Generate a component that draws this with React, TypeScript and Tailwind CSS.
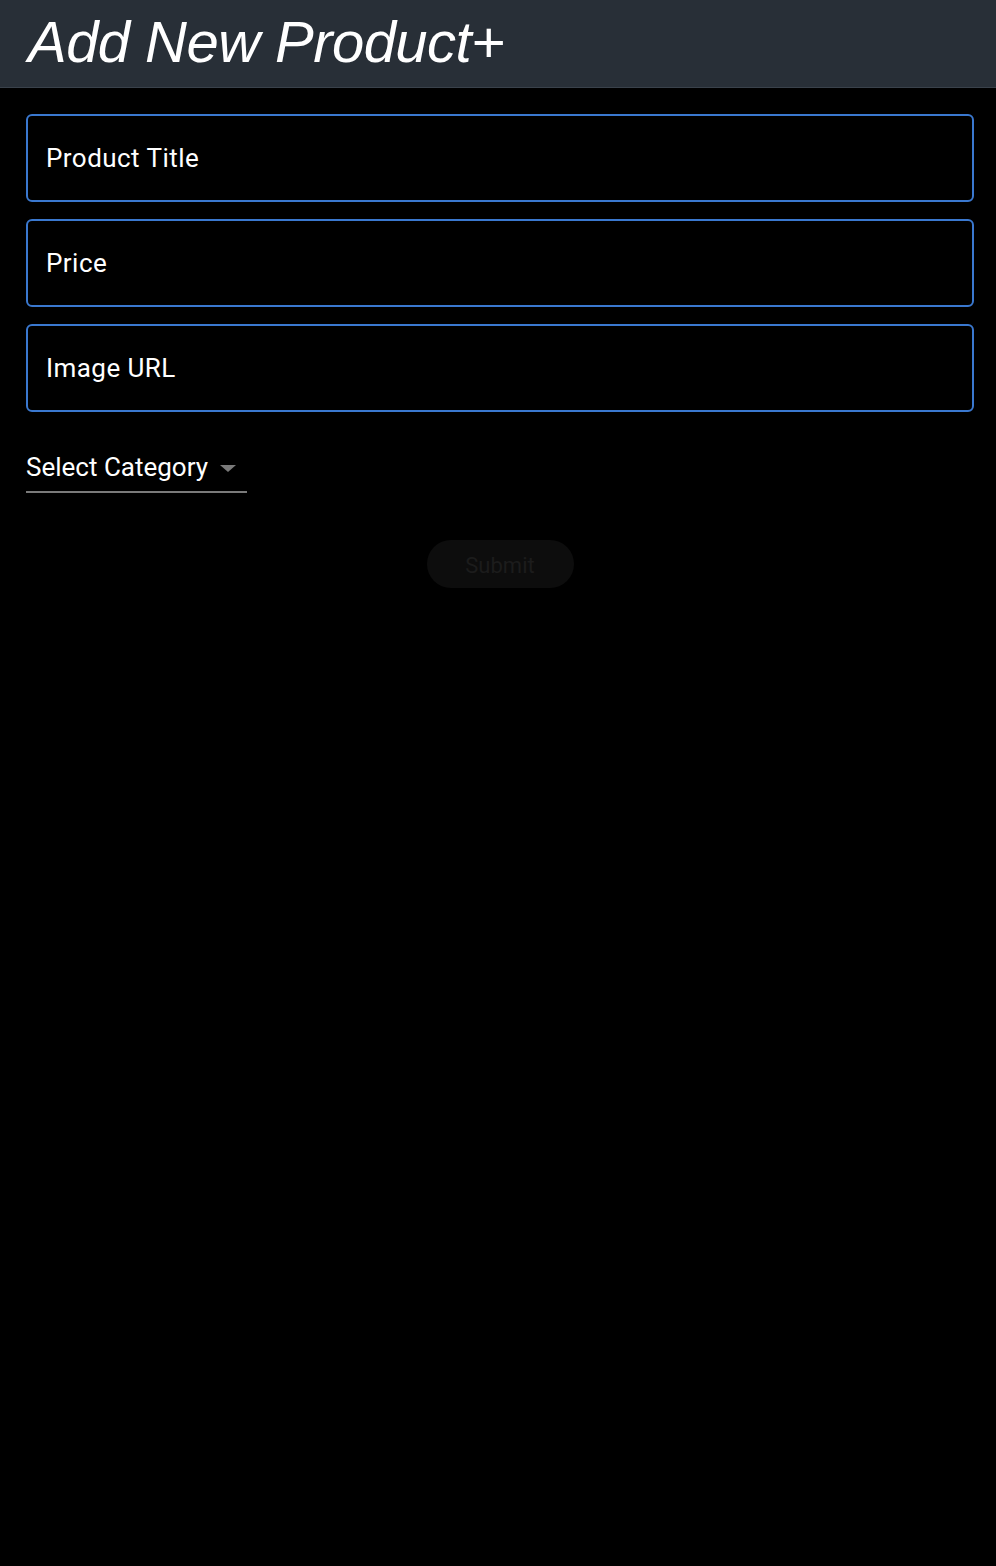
export default function App() {
  const fields = ['Product Title', 'Price', 'Image URL'];

  return (
    <div className="min-h-[1566px] w-full bg-black" style={{ fontFamily: 'Roboto, "Liberation Sans", sans-serif' }}>
      {/* Header */}
      <div className="h-[88px] bg-[#282f37] border-b border-[#3a424b] px-[28px] flex items-center">
        <h1
          className="text-[58px] italic text-white leading-none tracking-[-0.55px] -mt-[4px]"
          style={{ fontFamily: '"Liberation Sans", Arial, sans-serif' }}
        >
          Add New Product+
        </h1>
      </div>

      <form className="pl-[26px] pr-[22px] pt-[26px] flex flex-col" onSubmit={(e) => e.preventDefault()}>
        <div className="flex flex-col gap-[17px]">
          {fields.map((f) => (
            <div
              key={f}
              className="h-[88px] rounded-[6px] border-2 border-[#3a78cf] flex items-center px-[18px]"
            >
              <span className="text-[26px] text-white tracking-[0.45px]">{f}</span>
            </div>
          ))}
        </div>

        <div className="mt-[38px] w-[221px] border-b-2 border-[#7a7a7a] flex items-center pb-[7px]">
          <span className="text-[26px] text-white leading-[34px]">Select Category</span>
          <svg width="18" height="10" viewBox="0 0 18 10" className="ml-[11px] mt-[3px]">
            <path d="M1 1 L17 1 L9 8 Z" fill="#7a7a7a" />
          </svg>
        </div>

        <div className="flex justify-center mt-[47px]">
          <button
            type="submit"
            className="w-[147px] h-[48px] rounded-full bg-[#0d0d0d] text-[22px] text-[#1c1c1c] pt-[2px]"
          >
            Submit
          </button>
        </div>
      </form>
    </div>
  );
}
